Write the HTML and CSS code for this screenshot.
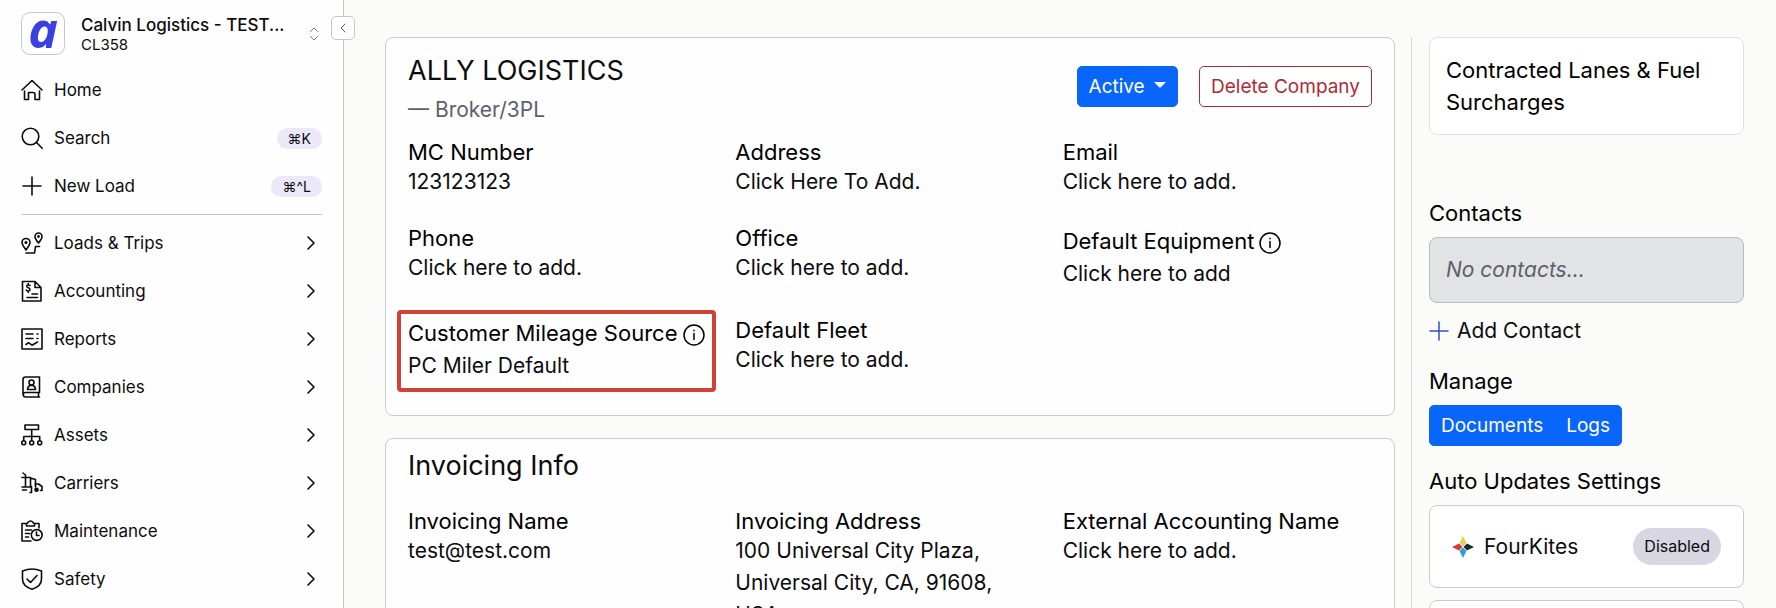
FILE: index.html
```
<!DOCTYPE html>
<html lang="en">
<head>
  <meta charset="UTF-8">
  <meta name="viewport" content="width=device-width, initial-scale=1">
  <title>Ally Logistics</title>
  <link rel="stylesheet" href="styles.css">
</head>
<body>
  <div class="app">
    <aside class="sidebar">
      <button class="collapse-btn" aria-label="Collapse sidebar">
        <svg width="8" height="12" viewBox="0 0 8 12"><path d="M6 2 2 6l4 4"/></svg>
      </button>

      <button class="account">
        <span class="account-logo">a</span>
        <span class="account-text">
          <span class="account-name">Calvin Logistics - TEST...</span>
          <span class="account-code">CL358</span>
        </span>
        <svg class="account-arrows" width="10" height="14" viewBox="0 0 10 14"><path d="M1.500 4.500 5 1l3.500 3.500M1.500 9.500 5 13l3.500-3.500"/></svg>
      </button>

      <nav class="nav">
        <a class="nav-item" href="#">
          <svg class="icon" viewBox="0 0 22 22"><path d="M1 11 11 1.500 21 11M3.500 12v8.500h4V13.500h2.500v0h2q2 0 2 2v5h4.500V12"/></svg>
          <span>Home</span>
        </a>
        <a class="nav-item" href="#">
          <svg class="icon" viewBox="0 0 22 22"><circle cx="9.500" cy="9.500" r="8.300"/><path d="m15.500 15.500 5.700 5.700"/></svg>
          <span>Search</span>
          <kbd>⌘K</kbd>
        </a>
        <a class="nav-item" href="#">
          <svg class="icon" viewBox="0 0 22 22"><path d="M11 2v18M2 11h18"/></svg>
          <span>New Load</span>
          <kbd>⌘^L</kbd>
        </a>
      </nav>

      <nav class="nav nav-sections">
        <a class="nav-item" href="#">
          <svg class="icon" viewBox="0 0 22 22"><path d="M5 18C2.500 14.500 1 12.500 1 10.500a4 4 0 0 1 8 0C9 12.500 7.500 14.500 5 18zM17.500 11C15 8 14 6.500 14 4.500a3.500 3.500 0 0 1 7 0C21 6.500 20 8 17.500 11zM18.500 14.500h-4L13.500 21H5"/><circle class="fill" cx="5" cy="10.500" r=".8"/><circle class="fill" cx="17.500" cy="4.500" r=".6"/></svg>
          <span>Loads &amp; Trips</span>
          <svg class="chevron" viewBox="0 0 8 14"><path d="m1 1 6 6-6 6"/></svg>
        </a>
        <a class="nav-item" href="#">
          <svg class="icon" viewBox="0 0 22 22"><path d="M1.500 1.500h12.500l6 6v13.500H1.500zM14 1.500v6h6M6 17.500h10.500M11 14h5.500"/><path d="M9 5.500C7.500 4.500 5.500 5 5.700 6.500c.2 1.600 3.300 1 3.300 3C9 11.200 6.500 11.500 5.200 10M7.300 3.500v1.200M7.300 11v1.500"/></svg>
          <span>Accounting</span>
          <svg class="chevron" viewBox="0 0 8 14"><path d="m1 1 6 6-6 6"/></svg>
        </a>
        <a class="nav-item" href="#">
          <svg class="icon" viewBox="0 0 22 22"><path d="M1 1h20v20H1zM5 6h7M5 10.500h7M16 6h1M16 10.500h1M5 16.500l2.500-1.800 3.500 2.500L16.500 14"/></svg>
          <span>Reports</span>
          <svg class="chevron" viewBox="0 0 8 14"><path d="m1 1 6 6-6 6"/></svg>
        </a>
        <a class="nav-item" href="#">
          <svg class="icon" viewBox="0 0 22 22"><path d="M18.500 16.500V1H4.500Q2 1 2 3.500v15M18.500 16.500H4.500a2.200 2.200 0 0 0 0 4.500h14M17.500 16.500V21M6.500 13.500h8c0-2.500-1.500-3.500-2.500-4h-3c-1 .5-2.500 1.500-2.500 4z"/><circle cx="10.500" cy="6.500" r="2.500"/></svg>
          <span>Companies</span>
          <svg class="chevron" viewBox="0 0 8 14"><path d="m1 1 6 6-6 6"/></svg>
        </a>
        <a class="nav-item" href="#">
          <svg class="icon" viewBox="0 0 22 22"><path d="M4 1h13.500v4.500H4zM10.700 5.500v11M2.700 16.500v-4h16v4"/><circle cx="2.700" cy="18.800" r="2"/><circle cx="10.700" cy="18.800" r="2"/><circle cx="18.700" cy="18.800" r="2"/></svg>
          <span>Assets</span>
          <svg class="chevron" viewBox="0 0 8 14"><path d="m1 1 6 6-6 6"/></svg>
        </a>
        <a class="nav-item" href="#">
          <svg class="icon" viewBox="0 0 22 22"><path d="M2 1l2.500 2v12M1 5.500h8.500v9.500M9.500 6l5 1.500v7.500M1 15h9M1.500 18h4M10.500 14.500v6H9M14 12h3.500l3.500 2.500v4h-1.500"/><circle class="fill" cx="15.500" cy="17.800" r="1.500"/></svg>
          <span>Carriers</span>
          <svg class="chevron" viewBox="0 0 8 14"><path d="m1 1 6 6-6 6"/></svg>
        </a>
        <a class="nav-item" href="#">
          <svg class="icon" viewBox="0 0 22 22"><path d="M10 21H1V3.500h4.500V6h8V3.500H18V8M5.500 3.500C7 3.500 7 1 9.500 1S12 3.500 13.500 3.500M4.500 10h6M4.500 13.500h4M4.500 17h3"/><circle cx="15.700" cy="15" r="5.400"/><path d="M15.500 12v3.500H18"/></svg>
          <span>Maintenance</span>
          <svg class="chevron" viewBox="0 0 8 14"><path d="m1 1 6 6-6 6"/></svg>
        </a>
        <a class="nav-item" href="#">
          <svg class="icon" viewBox="0 0 22 22"><path d="M11 1C8 1 4.500 1.800 1.500 3v8c0 5 4 8.500 9.500 10.200 5.500-1.700 9.500-5.200 9.500-10.200V3C17.500 1.800 14 1 11 1zM6 11l3.500 3.500L16 7.500"/></svg>
          <span>Safety</span>
          <svg class="chevron" viewBox="0 0 8 14"><path d="m1 1 6 6-6 6"/></svg>
        </a>
      </nav>
    </aside>

    <main class="content">
      <section class="card">
        <header class="card-header">
          <div>
            <h1>ALLY LOGISTICS</h1>
            <p class="company-type">— Broker/3PL</p>
          </div>
          <div class="actions">
            <button class="btn btn-primary">Active <span class="caret"></span></button>
            <button class="btn btn-outline-danger">Delete Company</button>
          </div>
        </header>

        <dl class="fields">
          <div class="field"><dt>MC Number</dt><dd>123123123</dd></div>
          <div class="field"><dt>Address</dt><dd>Click Here To Add.</dd></div>
          <div class="field"><dt>Email</dt><dd>Click here to add.</dd></div>
          <div class="field"><dt>Phone</dt><dd>Click here to add.</dd></div>
          <div class="field"><dt>Office</dt><dd>Click here to add.</dd></div>
          <div class="field">
            <dt class="with-info">Default Equipment
              <svg class="info" viewBox="0 0 22 22"><circle cx="11" cy="11" r="10"/><path d="M11 9.500v6M11 6.300v.4"/></svg>
            </dt>
            <dd>Click here to add</dd>
          </div>
          <div class="field highlight">
            <dt class="with-info">Customer Mileage Source
              <svg class="info" viewBox="0 0 22 22"><circle cx="11" cy="11" r="10"/><path d="M11 9.500v6M11 6.300v.4"/></svg>
            </dt>
            <dd>PC Miler Default</dd>
          </div>
          <div class="field"><dt>Default Fleet</dt><dd>Click here to add.</dd></div>
        </dl>
      </section>

      <section class="card">
        <h2>Invoicing Info</h2>
        <dl class="fields">
          <div class="field"><dt>Invoicing Name</dt><dd>test@test.com</dd></div>
          <div class="field"><dt>Invoicing Address</dt><dd>100 Universal City Plaza, Universal City, CA, 91608, USA</dd></div>
          <div class="field"><dt>External Accounting Name</dt><dd>Click here to add.</dd></div>
        </dl>
      </section>
    </main>

    <aside class="panel">
      <a class="panel-card" href="#">Contracted Lanes &amp; Fuel Surcharges</a>

      <h3 class="contacts-title">Contacts</h3>
      <p class="panel-card empty">No contacts...</p>
      <button class="add-contact">
        <svg width="20" height="20" viewBox="0 0 20 20"><path d="M10 1v18M1 10h18"/></svg>
        Add Contact
      </button>

      <h3>Manage</h3>
      <div class="btn-group">
        <button class="btn btn-primary">Documents</button>
        <button class="btn btn-primary">Logs</button>
      </div>

      <h3>Auto Updates Settings</h3>
      <div class="panel-card integration">
        <svg width="22" height="22" viewBox="0 0 22 22">
          <path fill="#e5d255" d="M11 0l3.500 7L11 10.500 7.500 7z"/>
          <path fill="#d93a35" d="M0 11l7-3.500 3.500 3.500L7 14.500z"/>
          <path fill="#1f2a30" d="M22 11l-7-3.500-3.500 3.500 3.500 3.500z"/>
          <path fill="#2a9fe0" d="M11 22l3.500-7L11 11.500 7.500 15z"/>
        </svg>
        <span>FourKites</span>
        <span class="badge">Disabled</span>
      </div>
      <div class="panel-card integration"></div>
    </aside>
  </div>
</body>
</html>
```
FILE: styles.css
```
* {
  box-sizing: border-box;
}

body {
  margin: 0;
  font-family: Inter, "Liberation Sans", sans-serif;
  font-size: 21px;
  line-height: 32px;
  color: #0c0c0d;
  background: #fbfbfa;
}

h1, h2, h3, p, dl, dd {
  margin: 0;
}

a {
  color: inherit;
  text-decoration: none;
}

button {
  font-family: inherit;
  color: inherit;
  cursor: pointer;
}

svg {
  flex: none;
  fill: none;
  stroke: currentColor;
  stroke-linecap: round;
  stroke-linejoin: round;
}

.app {
  display: flex;
  height: 100vh;
  overflow: hidden;
}

/* Sidebar */
.sidebar {
  position: relative;
  flex: none;
  width: 344px;
  padding: 12px 21px 0;
  background: #fefefe;
  border-right: 1px solid #c6c8cc;
}

.collapse-btn {
  position: absolute;
  top: 16px;
  right: -12px;
  display: flex;
  align-items: center;
  justify-content: center;
  width: 24px;
  height: 24px;
  padding: 0;
  background: #fff;
  border: 1px solid #c6c8cc;
  border-radius: 5px;
  color: #55585e;
}

.account {
  display: flex;
  align-items: center;
  width: 100%;
  padding: 0;
  background: none;
  border: none;
  text-align: left;
}

.account-logo {
  flex: none;
  width: 44px;
  height: 43px;
  margin-right: 16px;
  border: 1px solid #c6c8cc;
  border-radius: 9px;
  font: italic 700 50px/32px "Open Sans", sans-serif;
  text-align: center;
  color: #3a3fe0;
}

.account-text {
  flex: 1;
  padding-top: 1px;
}

.account-name,
.account-code {
  display: block;
  font-size: 17px;
  font-weight: 500;
  line-height: 21px;
  white-space: nowrap;
}

.account-code {
  font-size: 15px;
  font-weight: 400;
  line-height: 18px;
}

.account-arrows {
  margin: 0 3px 0 16px;
  color: #77797e;
}

.nav {
  padding: 11px 0 4px;
}

.nav-sections {
  padding-top: 4px;
  border-top: 1px solid #c6c8cc;
}

.nav-item {
  display: flex;
  align-items: center;
  gap: 11px;
  height: 48px;
  font-size: 17px;
}

.icon {
  width: 22px;
  height: 22px;
  stroke-width: 1.6;
}

.fill {
  fill: currentColor;
}

.chevron {
  width: 8px;
  height: 14px;
  margin: 0 7px 0 auto;
  stroke-width: 1.6;
}

kbd {
  margin-left: auto;
  padding: 0 11px;
  border-radius: 11px;
  background: #ebe9f8;
  font-family: Inter, "DejaVu Sans", sans-serif;
  font-size: 14px;
  line-height: 21px;
}

/* Company details */
.content {
  flex: 1;
  min-width: 0;
  padding: 37px 16px 0 41px;
}

.card {
  margin-bottom: 22px;
  padding: 9px 22px 33px;
  background: #fefefe;
  border: 1px solid #cacbce;
  border-radius: 8px;
}

.card-header {
  display: flex;
  align-items: center;
  justify-content: space-between;
  margin-bottom: 14px;
}

h1 {
  font-size: 27px;
  font-weight: 400;
  line-height: 47px;
}

h2 {
  margin-bottom: 26px;
  font-size: 27px;
  font-weight: 400;
  line-height: 35px;
}

.company-type {
  color: #5c616b;
}

.actions {
  display: flex;
  gap: 21px;
}

.btn {
  padding: 0 11px;
  border: 1px solid transparent;
  border-radius: 5px;
  font-size: 19px;
  line-height: 39px;
}

.btn-primary {
  background: #0866fb;
  border-color: #0866fb;
  color: #fff;
}

.btn-outline-danger {
  background: #fff;
  border-color: #b02a37;
  color: #b02a37;
}

.caret {
  display: inline-block;
  margin-left: 4px;
  vertical-align: 5px;
  border: 6px solid transparent;
  border-top-color: currentColor;
  border-bottom: 0;
}

.fields {
  display: grid;
  grid-template-columns: repeat(3, 1fr);
  gap: 28px 18px;
}

.field dt {
  padding-bottom: 2px;
  font-size: 22px;
  font-weight: 400;
  line-height: 24px;
  color: #000;
}

.field dd {
  padding-right: 16px;
}

.field .with-info {
  display: flex;
  align-items: center;
  gap: 5px;
  line-height: 30px;
}

.info {
  width: 22px;
  height: 22px;
  margin-top: 3px;
  stroke-width: 1.5;
}

.highlight {
  position: relative;
  justify-self: start;
}

.highlight::after {
  content: '';
  position: absolute;
  inset: -8px -11px -10px -11px;
  border: 4px solid #cf4236;
  border-radius: 4px;
}

/* Right panel */
.panel {
  flex: none;
  width: 365px;
  margin-top: 37px;
  padding: 0 32px 0 17px;
  border-left: 1px solid #d3d6da;
}

.panel h3 {
  margin-bottom: 8px;
  font-size: 22px;
  font-weight: 400;
  color: #000;
}

.panel-card {
  display: block;
  padding: 16px;
  background: #fff;
  border: 1px solid #cacbce;
  border-radius: 8px;
}

a.panel-card {
  border-color: #dee0e3;
  font-size: 22px;
  color: #000;
}

.panel .contacts-title {
  margin-top: 62px;
}

.empty {
  background: #e2e3e5;
  border-color: #b9bbbf;
  font-style: italic;
  color: #5c616b;
}

.add-contact {
  display: flex;
  align-items: center;
  gap: 8px;
  margin: 12px 0 18px;
  padding: 0;
  background: none;
  border: none;
  font-size: 21px;
  line-height: 32px;
}

.add-contact svg {
  color: #2f4fd0;
  stroke-width: 1.5;
}

.btn-group {
  display: flex;
  margin-bottom: 19px;
}

.btn-group .btn:first-child {
  border-radius: 5px 0 0 5px;
}

.btn-group .btn:last-child {
  margin-left: -1px;
  border-radius: 0 5px 5px 0;
}

.integration {
  display: flex;
  align-items: center;
  min-height: 83px;
  margin-bottom: 12px;
  padding: 22px;
}

.integration svg {
  margin-right: 10px;
  stroke: none;
}

.badge {
  margin-left: auto;
  padding: 0 11px;
  border-radius: 19px;
  background: #d8d6e1;
  font-size: 16px;
  line-height: 37px;
}
```
